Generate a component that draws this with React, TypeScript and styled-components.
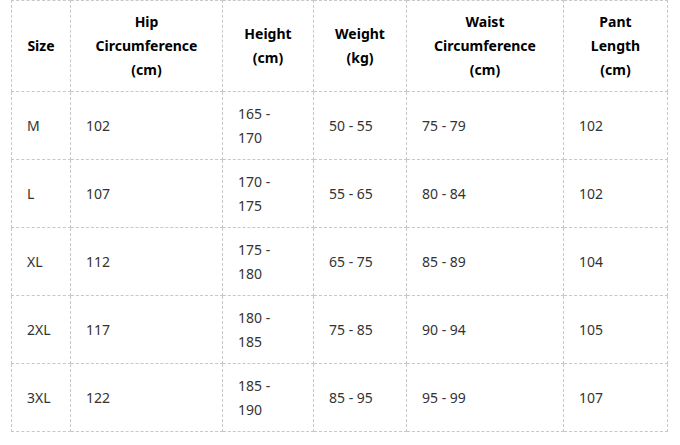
import React from 'react';
import styled, { createGlobalStyle } from 'styled-components';

const GlobalStyle = createGlobalStyle`
  html, body {
    margin: 0;
    padding: 0;
    background: #fff;
  }
  body {
    font-family: "Noto Sans", "Open Sans", Arial, sans-serif;
  }
`;

type Column = {
  title: string[];
  width: number;
  wrap?: boolean;
};

const columns: Column[] = [
  { title: ['Size'], width: 59 },
  { title: ['Hip', 'Circumference', '(cm)'], width: 152 },
  { title: ['Height', '(cm)'], width: 91, wrap: true },
  { title: ['Weight', '(kg)'], width: 93 },
  { title: ['Waist', 'Circumference', '(cm)'], width: 157 },
  { title: ['Pant', 'Length', '(cm)'], width: 104 },
];

const rows: string[][] = [
  ['M', '102', '165 - 170', '50 - 55', '75 - 79', '102'],
  ['L', '107', '170 - 175', '55 - 65', '80 - 84', '102'],
  ['XL', '112', '175 - 180', '65 - 75', '85 - 89', '104'],
  ['2XL', '117', '180 - 185', '75 - 85', '90 - 94', '105'],
  ['3XL', '122', '185 - 190', '85 - 95', '95 - 99', '107'],
];

export default function App() {
  return (
    <>
      <GlobalStyle />
      <Page>
        <SizeTable>
          <colgroup>
            {columns.map((c, i) => (
              <col key={i} style={{ width: c.width }} />
            ))}
          </colgroup>
          <thead>
            <tr>
              {columns.map((c, i) => (
                <HeadCell key={i}>
                  {c.title.map((line, j) => (
                    <React.Fragment key={j}>
                      {j > 0 && <br />}
                      {line}
                    </React.Fragment>
                  ))}
                </HeadCell>
              ))}
            </tr>
          </thead>
          <tbody>
            {rows.map((row, i) => (
              <tr key={i}>
                {row.map((value, j) => (
                  <BodyCell key={j} $narrow={!!columns[j].wrap}>
                    {value}
                  </BodyCell>
                ))}
              </tr>
            ))}
          </tbody>
        </SizeTable>
      </Page>
    </>
  );
}

const Page = styled.div`
  padding: 0 0 0 11px;
`;

const SizeTable = styled.table`
  table-layout: fixed;
  width: 657px;
  border-collapse: collapse;
  font-size: 14px;
  line-height: 24px;
`;

const HeadCell = styled.th`
  height: 91px;
  padding: 0 12px;
  border: 1px dashed #c8c8c8;
  color: #000;
  font-weight: 700;
  text-align: center;
  vertical-align: middle;
  box-sizing: border-box;
`;

const BodyCell = styled.td<{ $narrow: boolean }>`
  height: 68px;
  padding: 0 ${(p) => (p.$narrow ? '30px' : '15px')} 0 15px;
  border: 1px dashed #c8c8c8;
  color: #333;
  text-align: left;
  vertical-align: middle;
  box-sizing: border-box;
`;
